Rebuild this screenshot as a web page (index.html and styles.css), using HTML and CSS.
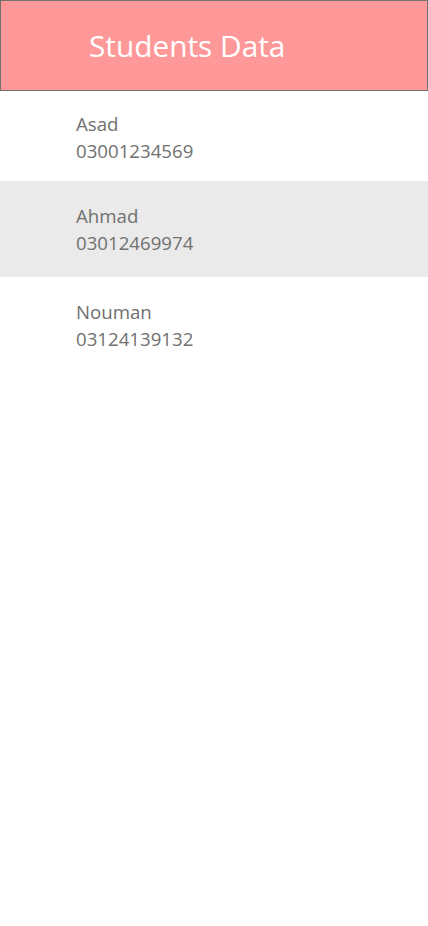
FILE: index.html
```html
<!DOCTYPE html>
<html>
<head>
<meta charset="utf-8">
<link rel="stylesheet" href="styles.css">
</head>
<body>
<header class="header"><h1 class="title">Students Data</h1></header>
<ul class="list">
  <li class="row"><span class="name">Asad</span><span class="phone">03001234569</span></li>
  <li class="row row-selected"><span class="name">Ahmad</span><span class="phone">03012469974</span></li>
  <li class="row"><span class="name">Nouman</span><span class="phone">03124139132</span></li>
</ul>
</body>
</html>
```
FILE: styles.css
```css
html, body {
  margin: 0;
  padding: 0;
  background: #ffffff;
  font-family: "Open Sans", "Noto Sans", sans-serif;
}
.header {
  box-sizing: border-box;
  height: 91px;
  background: #ff9999;
  border: 1px solid #707070;
  display: flex;
  align-items: center;
  padding-left: 88px;
}
.title {
  margin: 0;
  color: #ffffff;
  font-weight: 400;
  font-size: 29.8px;
  line-height: 1;
  padding-top: 1px;
}
.list {
  list-style: none;
  margin: 0;
  padding: 0;
}
.row {
  box-sizing: border-box;
  height: 96px;
  display: flex;
  flex-direction: column;
  padding: 21px 0 0 76px;
  color: #707070;
  font-size: 18.67px;
  line-height: 27px;
}
.row:first-child {
  height: 90px;
  padding-top: 19px;
}
.row-selected {
  background: #eaeaea;
}
```
